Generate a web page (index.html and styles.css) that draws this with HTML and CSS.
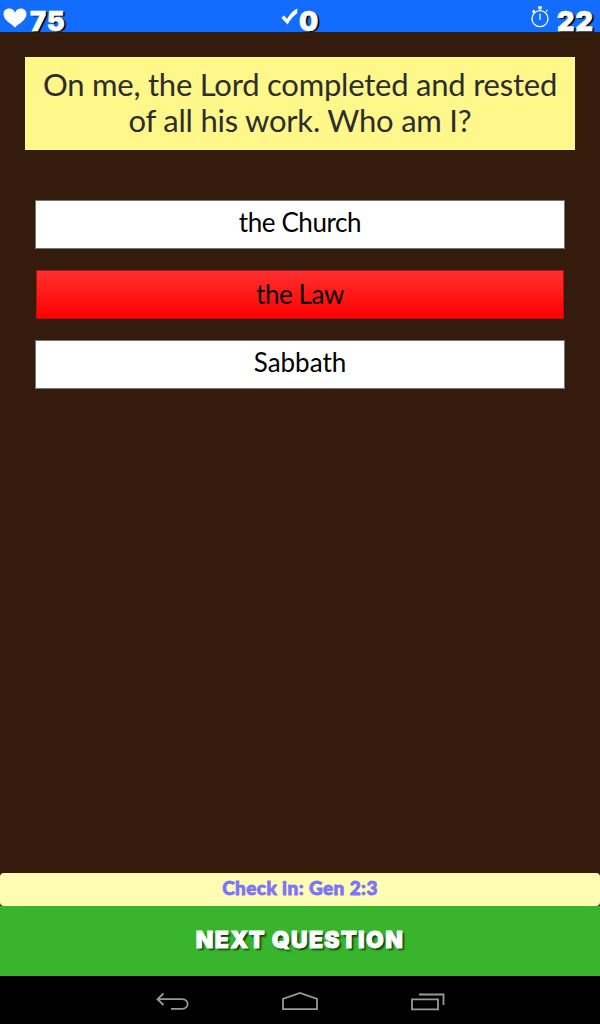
FILE: index.html
```
<!DOCTYPE html>
<html lang="en">
<head>
  <meta charset="UTF-8" />
  <meta name="viewport" content="width=device-width, initial-scale=1.0"/>
  <title>Bible Quiz</title>
  <link rel="stylesheet" href="styles.css">
</head>
<body>

  <!-- Score bar -->
  <header class="status-bar">
    <div class="status lives">
      <svg class="heart" width="24" height="20" viewBox="0 0 24 20">
        <path d="M12 19.5C10 16.5 0.5 12.5 0.5 6.2C0.5 2.8 3 0.6 6 0.6C9 0.6 11.3 2.3 12 5C12.7 2.3 15 0.6 18 0.6C21 0.6 23.5 2.8 23.5 6.2C23.5 12.5 14 16.5 12 19.5Z" fill="#fff"/>
      </svg>
      <span class="number">75</span>
    </div>
    <div class="status correct">
      <svg class="check" width="18" height="18" viewBox="0 0 18 18">
        <path d="M0.3 9.8L3.2 7.6L6 11C8.4 6.5 11.5 3 16.3 0.4L16.2 5.2C12.2 8.2 9.3 11.5 6.6 16.5Z" fill="#fff"/>
      </svg>
      <span class="number">0</span>
    </div>
    <div class="status timer">
      <svg class="stopwatch" width="20" height="22" viewBox="0 0 20 22">
        <circle cx="9" cy="12.7" r="8" fill="none" stroke="#fff" stroke-width="1.3"/>
        <path d="M9 7.5V14M9 2V5M15 5.5L16.5 4" fill="none" stroke="#fff" stroke-width="1.2"/>
        <path d="M7.2 0.3H10.8V2.8H7.2ZM0.8 5.6L2.8 3.6L4.4 5.2L2.4 7.2Z" fill="#fff"/>
      </svg>
      <span class="number">22</span>
    </div>
  </header>

  <main class="quiz">
    <h1 class="question">On me, the Lord completed and rested<br>of all his work. Who am I?</h1>
    <div class="answers">
      <button class="answer">the Church</button>
      <button class="answer wrong">the Law</button>
      <button class="answer last">Sabbath</button>
    </div>
  </main>

  <div class="hint">Check in: Gen 2:3</div>
  <button class="next">NEXT QUESTION</button>

  <!-- Navigation buttons -->
  <nav class="nav-bar">
    <svg width="34" height="20" viewBox="0 0 34 20">
      <path d="M7.5 1.5L1.5 7.2L7.5 13M2 7.2H26C33.5 7.2 33.5 16.8 26 16.8H15" fill="none" stroke="#999" stroke-width="1.8"/>
    </svg>
    <svg width="36" height="20" viewBox="0 0 36 20">
      <path d="M1 17.2V7L18 1L35 7V17.2Z" fill="none" stroke="#999" stroke-width="1.8"/>
    </svg>
    <svg width="35" height="20" viewBox="0 0 35 20">
      <path d="M2 7.3H28V17.3H2ZM9 2.5H33.5V13" fill="none" stroke="#999" stroke-width="1.8"/>
    </svg>
  </nav>

</body>
</html>
```

FILE: styles.css
```
* {
  box-sizing: border-box;
}

body {
  margin: 0;
  height: 1024px;
  display: flex;
  flex-direction: column;
  background: #341b0b;
  font-family: Lato, sans-serif;
  overflow: hidden;
}

button {
  border: 0;
  margin: 0;
  font-family: inherit;
}

.status-bar {
  height: 32px;
  display: grid;
  grid-template-columns: 1fr 1fr 1fr;
  background: #126dff;
}

.status {
  display: flex;
  align-items: flex-start;
  height: 32px;
}

.lives { padding-left: 3px; gap: 3px; }
.correct { justify-content: center; }
.timer { justify-content: flex-end; padding-right: 6px; gap: 6px; }

.heart { margin-top: 8px; }
.check { margin-top: 8px; }
.stopwatch { margin-top: 6px; }

.number {
  height: 32px;
  padding-top: 12px;
  font: 900 27px/20px Inter, sans-serif;
  letter-spacing: 1px;
  color: #fff;
  text-shadow: 2px 1px 1px #000;
  -webkit-text-stroke: 0.6px #fff;
}

.quiz {
  flex: 1;
  padding: 25px 25px 0;
}

.question {
  height: 93px;
  margin: 0;
  padding-top: 9px;
  background: #fff78a;
  color: #2d2d2d;
  font-size: 31px;
  font-weight: 400;
  line-height: 36px;
  letter-spacing: -0.22px;
  text-align: center;
  white-space: nowrap;
}

.answers {
  display: flex;
  flex-direction: column;
  gap: 22px;
  padding: 50px 10px 0;
}

.answer {
  height: 49px;
  padding: 0 0 6px;
  background: #fff;
  border: 1px solid #777;
  color: #000;
  font-size: 26px;
  line-height: 36px;
  letter-spacing: -0.4px;
}

.wrong {
  margin: -1px 1px 0;
  background: linear-gradient(#ff3030, #ff0000);
  border-color: #b31212;
  padding-bottom: 2px;
}

.last {
  margin-top: -1px;
  letter-spacing: 0;
}

.hint {
  height: 33px;
  border-radius: 4px;
  background: #fffdb2;
  color: #7b74fa;
  font: 900 19px/30px Lato, sans-serif;
  letter-spacing: 0.4px;
  text-align: center;
  -webkit-text-stroke: 0.8px #7b74fa;
}

.next {
  height: 70px;
  background: #39b52d;
  color: #fff;
  font: 900 23px/68px Inter, sans-serif;
  letter-spacing: 1.3px;
  padding: 0 0 2px;
  text-shadow: 2px 2px 2px #063c06;
  -webkit-text-stroke: 0.8px #fff;
}

.nav-bar {
  height: 48px;
  display: flex;
  justify-content: center;
  align-items: center;
  gap: 92px;
  padding-top: 3px;
  background: #000;
}
```
